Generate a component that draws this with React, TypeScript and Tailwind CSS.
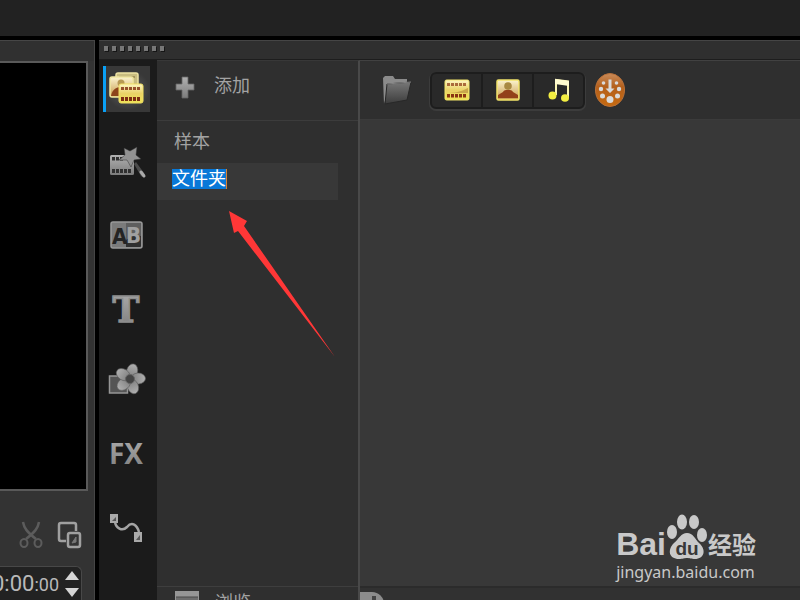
import type { ReactNode } from "react";

const Gradients = () => (
  <svg className="absolute h-0 w-0" aria-hidden="true">
    <defs>
      <linearGradient id="metal" x1="0" y1="0" x2="0" y2="1">
        <stop offset="0" stopColor="#b0b0b0" />
        <stop offset="1" stopColor="#7c7c7c" />
      </linearGradient>
      <linearGradient id="gold" x1="0" y1="0" x2="0" y2="1">
        <stop offset="0" stopColor="#fdf6c4" />
        <stop offset="0.5" stopColor="#ead267" />
        <stop offset="1" stopColor="#efe356" />
      </linearGradient>
      <linearGradient id="sepia" x1="0" y1="0" x2="0" y2="1">
        <stop offset="0" stopColor="#fbf4cf" />
        <stop offset="1" stopColor="#c89a4a" />
      </linearGradient>
      <linearGradient id="folder" x1="0" y1="0" x2="0" y2="1">
        <stop offset="0" stopColor="#777777" />
        <stop offset="1" stopColor="#3c3c3c" />
      </linearGradient>
      <linearGradient id="orange" x1="0" y1="0" x2="0" y2="1">
        <stop offset="0" stopColor="#c98b5a" />
        <stop offset="0.4" stopColor="#b4601c" />
        <stop offset="1" stopColor="#c66a10" />
      </linearGradient>
      <radialGradient id="glow">
        <stop offset="0" stopColor="#8a8a8a" />
        <stop offset="1" stopColor="#8a8a8a" stopOpacity="0" />
      </radialGradient>
    </defs>
  </svg>
);

const holes = [0, 1, 2, 3, 4];

const MediaIcon = () => (
  <svg width="44" height="44" viewBox="0 0 44 44">
    <ellipse cx="22" cy="23" rx="22" ry="20" fill="url(#glow)" opacity="0.5" />
    <rect x="10" y="6" width="22" height="17" rx="2" fill="#c9bd80" stroke="#eee3a4" strokeWidth="1.5" />
    <path d="M13 10h16" stroke="#a3935a" strokeWidth="2" />
    <rect x="4" y="10" width="23" height="20" rx="2" fill="url(#sepia)" stroke="#efe6a0" strokeWidth="1.5" />
    <circle cx="15" cy="16" r="3.5" fill="#b79a54" />
    <path d="M5 29c1-6 5-9 10-9v9z" fill="#8d441b" />
    <rect x="13" y="17" width="24" height="19" rx="2" fill="url(#gold)" stroke="#f0df62" strokeWidth="1" />
    {holes.map((n) => (
      <g key={n} fill="#7f2d12">
        <rect x={15 + n * 4} y="20" width="3" height="3" opacity="0.8" />
        <rect x={15 + n * 4} y="30" width="3" height="4" />
      </g>
    ))}
  </svg>
);

const InstantIcon = () => (
  <svg width="44" height="44" viewBox="0 0 44 44">
    <rect x="4" y="15" width="24" height="20" rx="1.5" fill="url(#metal)" />
    {holes.map((n) => (
      <g key={n} fill="#303030">
        {n < 3 && <rect x={6 + n * 4} y="17" width="3" height="3.5" />}
        <rect x={6 + n * 4} y="29" width="3" height="4" />
      </g>
    ))}
    <path d="M28 24l2-2 8 11a2 2 0 0 1-3 3z" fill="#4c4c4c" />
    <path d="M35 32l3 4" stroke="#aaa" strokeWidth="3" strokeLinecap="round" />
    <path d="M18 8l6 3 7-4-1 8 5 4-7 1-3 7-4-7-8 0 6-5z" fill="#929292" stroke="#333" strokeWidth="0.5" />
  </svg>
);

const TransitionIcon = () => (
  <svg width="44" height="44" viewBox="0 0 44 44">
    <rect x="5" y="9" width="31" height="26" rx="2" fill="#7b7b7b" stroke="#999" strokeWidth="1.5" />
    <path d="M20 10h15v23a1 1 0 0 1-1 1H20z" fill="#303030" />
    <path d="M20 10h15v13q-7-2-15 4z" fill="#5e5e5e" />
    <text x="6" y="31" fontSize="22" fontWeight="bold" fontFamily="DejaVu Sans Condensed, sans-serif" fill="#242424">A</text>
    <text x="20" y="30" fontSize="22" fontWeight="bold" fontFamily="DejaVu Sans Condensed, sans-serif" fill="#a0a0a0">B</text>
  </svg>
);

const TitleIcon = () => (
  <svg width="44" height="44" viewBox="0 0 44 44">
    <text x="20" y="36" textAnchor="middle" fontSize="36" fontWeight="bold" fontFamily="DejaVu Serif, serif" fill="url(#metal)" stroke="#8e8e8e" strokeWidth="1.5">T</text>
  </svg>
);

const GraphicIcon = () => (
  <svg width="44" height="44" viewBox="0 0 44 44">
    <rect x="3.500" y="17" width="18" height="17" fill="#555" stroke="#969696" strokeWidth="1.5" />
    <g fill="url(#metal)" stroke="#5c5c5c" strokeWidth="0.6">
      {[15, 87, 159, 231, 303].map((angle) => (
        <ellipse key={angle} cx="24" cy="12" rx="5.500" ry="7.500" transform={`rotate(${angle} 24 20)`} />
      ))}
    </g>
    <circle cx="24" cy="20" r="4.500" fill="#444" stroke="#666" />
  </svg>
);

const FilterIcon = () => (
  <svg width="44" height="44" viewBox="0 0 44 44">
    <text x="20" y="32" textAnchor="middle" fontSize="28" fontWeight="bold" fontFamily="Noto Sans, sans-serif" fill="url(#metal)">FX</text>
  </svg>
);

const PathIcon = () => (
  <svg width="44" height="44" viewBox="0 0 44 44">
    <path d="M9 17c1 6 7 10 12 5 5-6 10-2 12 5" fill="none" stroke="#a4a4a4" strokeWidth="2.500" />
    <rect x="4" y="9" width="8" height="9" fill="#a9a9a9" />
    <rect x="28" y="27" width="8" height="10" fill="#a9a9a9" />
    <path d="M10 12v4H6zM34 30v5h-4z" fill="#555" />
  </svg>
);

const PlusIcon = () => (
  <svg width="20" height="23" viewBox="0 0 20 23">
    <path d="M7 1h6v7h6v6h-6v8H7v-8H1V8h6z" fill="url(#metal)" stroke="#666" strokeWidth="0.8" />
  </svg>
);

const FolderIcon = () => (
  <svg width="30" height="32" viewBox="0 0 30 32">
    <path d="M2 30L1 4l2-2h8l2 3h12v5H8z" fill="#8b8b8b" />
    <path d="M5 10l24-2-4 18L3 30z" fill="url(#folder)" stroke="#282828" />
    <path d="M5 10l24-2" stroke="#858585" />
  </svg>
);

const VideoIcon = () => (
  <svg width="26" height="22" viewBox="0 0 26 22">
    <rect x="1" y="1" width="24" height="20" rx="1.5" fill="url(#gold)" stroke="#f2e469" />
    <path d="M2 14c8 0 15-1 22-5v5z" fill="#c9a64c" />
    {holes.map((n) => (
      <g key={n} fill="#8a3512">
        <rect x={3 + n * 4} y="4" width="3" height="3" opacity="0.7" />
        <rect x={3 + n * 4} y="15" width="3" height="3.500" />
      </g>
    ))}
  </svg>
);

const PhotoIcon = () => (
  <svg width="24" height="22" viewBox="0 0 24 22">
    <rect x="1" y="1" width="22" height="20" rx="1.500" fill="url(#sepia)" stroke="#f2e469" strokeWidth="1.500" />
    <path d="M2 19v-3l5-3c1-3 9-3 10 0l5 3v3z" fill="#93411a" />
    <circle cx="12" cy="7" r="3.800" fill="#a88942" />
  </svg>
);

const MusicIcon = () => (
  <svg width="22" height="24" viewBox="0 0 22 24">
    <path d="M8 17V2l12 1.500V20" fill="none" stroke="#fbf5b4" strokeWidth="2" />
    <path d="M7 1l14 2v5L7 6z" fill="#fffbd0" />
    <ellipse cx="4.500" cy="17.500" rx="4" ry="4" fill="#f3ee42" />
    <ellipse cx="17" cy="20" rx="4" ry="3.800" fill="#f3ee42" />
  </svg>
);

const CaptureIcon = () => (
  <svg width="30" height="34" viewBox="0 0 30 34">
    <ellipse cx="15" cy="17" rx="14.500" ry="16.500" fill="url(#orange)" stroke="#b87038" />
    <g fill="#dadada">
      <path d="M13.500 6.500h3v9h3L15 20l-4.500-4.500h3z" />
      <circle cx="8.500" cy="10" r="1.800" />
      <circle cx="21.500" cy="10" r="1.800" />
      <circle cx="6" cy="16" r="2.200" />
      <circle cx="24" cy="16" r="2.200" />
      <circle cx="7.500" cy="23" r="2.500" />
      <circle cx="22.500" cy="23" r="2.500" />
      <circle cx="15" cy="26.500" r="3.500" />
    </g>
  </svg>
);

const railItems: { label: string; icon: ReactNode }[] = [
  { label: "媒体", icon: <MediaIcon /> },
  { label: "即时项目", icon: <InstantIcon /> },
  { label: "转场", icon: <TransitionIcon /> },
  { label: "标题", icon: <TitleIcon /> },
  { label: "图形", icon: <GraphicIcon /> },
  { label: "滤镜", icon: <FilterIcon /> },
  { label: "路径", icon: <PathIcon /> },
];

const Preview = () => (
  <section className="flex w-[95px] shrink-0 flex-col border-t border-r border-[#464646] bg-[#333333]">
    <div className="h-5 shrink-0 bg-[#303030]" />
    <div className="mr-1.5 flex-1 border-t-2 border-r-2 border-b-2 border-[#595959] bg-black" />
    <div className="flex h-[75px] shrink-0 items-center justify-end gap-3.5 pt-3 pr-3">
      <button aria-label="剪切">
        <svg width="24" height="28" viewBox="0 0 24 28" fill="none" stroke="#5c5c5c" strokeWidth="2">
          <path d="M4 1c1 6 4 10 13 17M20 1c-1 6-4 10-13 17" strokeWidth="2.500" />
          <ellipse cx="5" cy="22" rx="3.500" ry="4" />
          <ellipse cx="19" cy="22" rx="3.500" ry="4" />
        </svg>
      </button>
      <button aria-label="复制">
        <svg width="25" height="28" viewBox="0 0 25 28" fill="none" stroke="#a0a0a0" strokeWidth="2.500">
          <path d="M9 20H4q-2 0-2-2V4q0-2 2-2h13q2 0 2 2v6" />
          <rect x="11" y="12" width="12" height="14" rx="2" />
          <path d="M15 22l4-6v5z" fill="#777" stroke="#777" strokeWidth="1" />
        </svg>
      </button>
    </div>
    <div className="mr-3 flex h-[34px] shrink-0 items-center justify-end gap-1.5 rounded-tr-md border-t border-r border-[#484848] bg-[#222222] pr-0.5">
      <div className="flex shrink-0 items-baseline font-['Roboto',sans-serif] text-[#b9b9b9]">
        <span className="text-[22px]">0:00</span>
        <span className="text-lg">:00</span>
      </div>
      <div className="flex flex-col gap-2">
        <button aria-label="增加">
          <svg className="block" width="14" height="9" viewBox="0 0 14 9"><path d="M7 0l7 9H0z" fill="#d5d5d5" /></svg>
        </button>
        <button aria-label="减少">
          <svg className="block" width="14" height="9" viewBox="0 0 14 9"><path d="M7 9l7-9H0z" fill="#d5d5d5" /></svg>
        </button>
      </div>
    </div>
  </section>
);

const Rail = () => (
  <nav className="flex w-[58px] shrink-0 flex-col gap-[27px] bg-[#1b1b1b] pt-1.5 pl-1">
    {railItems.map(({ label, icon }, index) => (
      <button
        key={label}
        aria-label={label}
        className={
          index === 0
            ? "flex h-[46px] w-[47px] shrink-0 items-center border-l-[3px] border-[#0aa0f5] bg-[#383838]"
            : "flex h-[46px] w-[47px] shrink-0 items-center border-l-[3px] border-transparent"
        }
      >
        {icon}
      </button>
    ))}
  </nav>
);

const FolderList = () => (
  <section className="flex w-[203px] shrink-0 flex-col border-t border-r-2 border-t-[#383838] border-r-[#494949] bg-[#2f2f2f] text-lg text-[#a3a3a3]">
    <button className="flex h-[60px] shrink-0 items-center gap-[19px] border-b border-[#3c3c3c] pb-2.5 pl-[18px]">
      <span className="pt-1"><PlusIcon /></span>
      <span>添加</span>
    </button>
    <ul className="flex-1">
      <li className="flex h-[42px] items-center pl-[17px]">样本</li>
      <li className="mr-5 flex h-[37px] items-start bg-[#383838] pt-1.5 pl-[15px]">
        <input
          aria-label="文件夹名称"
          className="h-5 w-[55px] border-r border-[#d78336] bg-[#0878d8] text-lg leading-5 text-white outline-none"
          defaultValue="文件夹"
        />
      </li>
    </ul>
    <div className="h-3.5 shrink-0 overflow-hidden border-t border-[#3e3e3e]">
      <button className="flex items-start gap-4 pt-1 pl-[18px]">
        <svg width="24" height="24" viewBox="0 0 24 24">
          <rect width="24" height="22" fill="#969696" />
          <path d="M1 6h22v14H1z" fill="#6e6e6e" />
          <path d="M1 6h22" stroke="#484848" />
        </svg>
        <span className="leading-6">浏览</span>
      </button>
    </div>
  </section>
);

const Watermark = () => (
  <div className="absolute right-11 bottom-4 text-[#c9c9c9]">
    <div className="flex h-[52px] items-end justify-between font-['Noto_Sans_CJK_SC',sans-serif] font-bold">
      <span className="font-['Liberation_Sans',sans-serif] text-[32px] leading-8">Bai</span>
      <svg width="42" height="46" viewBox="0 0 42 46">
        <g fill="#c9c9c9">
          <ellipse cx="6" cy="18" rx="5" ry="7" />
          <ellipse cx="16" cy="8" rx="5" ry="7.500" />
          <ellipse cx="28" cy="8" rx="5" ry="7" />
          <ellipse cx="36" cy="21" rx="5" ry="7" />
          <path d="M21 19c6 0 8 6 12 10 8 7 5 16-4 16-4 0-5-1-8-1s-4 1-8 1c-10 0-12-9-5-16 5-4 7-10 13-10z" />
        </g>
        <text x="21" y="41" textAnchor="middle" fontFamily="Liberation Sans, sans-serif" fontSize="19" fill="#383838">du</text>
      </svg>
      <span className="text-2xl leading-8">经验</span>
    </div>
    <a href="#jingyan" className="block font-['Noto_Sans',sans-serif] text-base leading-6">jingyan.baidu.com</a>
  </div>
);

const Gallery = () => (
  <section className="relative flex min-w-0 flex-1 flex-col border-t border-[#414141] bg-[#383838]">
    <div className="flex h-[59px] shrink-0 items-center border-b border-[#3b3b3b] bg-[#2f2f2f] pl-[22px]">
      <button aria-label="打开文件夹" className="mr-[18px]"><FolderIcon /></button>
      <div className="mr-2.5 flex h-[37px] w-[155px] divide-x-2 divide-[#1d1d1d] rounded-md border-2 border-[#1d1d1d] bg-[#292929] shadow-[0_1px_0_1px_#3c3c3c]">
        <button aria-label="视频" className="flex flex-1 items-center justify-center"><VideoIcon /></button>
        <button aria-label="照片" className="flex flex-1 items-center justify-center"><PhotoIcon /></button>
        <button aria-label="音频" className="flex flex-1 items-center justify-center"><MusicIcon /></button>
      </div>
      <button aria-label="捕获"><CaptureIcon /></button>
    </div>
    <div className="flex-1" />
    <div className="h-3.5 shrink-0 overflow-hidden border-t-2 border-[#2b2b2b] bg-[#313131] pt-1">
      <div className="h-5 w-6 rounded-tr-xl bg-[#8c8c8c] pt-1 pl-3">
        <div className="h-3 w-1 bg-[#444444]" />
      </div>
    </div>
    <Watermark />
  </section>
);

export default function App() {
  return (
    <div className="relative flex h-screen flex-col overflow-hidden bg-black font-['Liberation_Sans','Noto_Sans_CJK_SC',sans-serif]">
      <Gradients />
      <header className="mb-1 h-9 shrink-0 bg-[#222222]" />
      <main className="flex min-h-0 flex-1 gap-1">
        <Preview />
        <div className="flex min-w-0 flex-1 flex-col">
          <div className="flex h-5 shrink-0 items-center gap-1 border-t border-b border-t-[#454545] border-b-[#1d1d1d] bg-[#2f2f2f] pb-1 pl-[5px]">
            {[0, 1, 2, 3, 4, 5, 6, 7].map((n) => (
              <span key={n} className="h-[5px] w-1 bg-[#777777] shadow-[1px_1px_0_#161616]" />
            ))}
          </div>
          <div className="flex min-h-0 flex-1">
            <Rail />
            <FolderList />
            <Gallery />
          </div>
        </div>
      </main>
      <svg className="pointer-events-none absolute top-[211px] left-[229px]" width="107" height="147" viewBox="0 0 107 147">
        <path d="M0 0l18 10-3 5 91 131L9 20l-4 2z" fill="#ff3737" />
      </svg>
    </div>
  );
}
